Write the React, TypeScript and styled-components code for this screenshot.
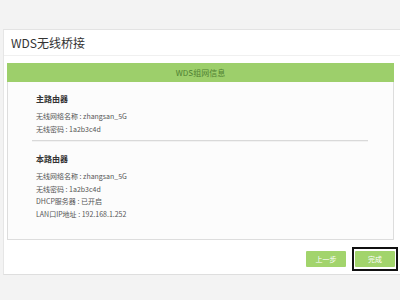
import React from "react";
import styled, { createGlobalStyle } from "styled-components";

const Global = createGlobalStyle`
  html, body {
    margin: 0;
    padding: 0;
    background: #f3f3f3;
  }
  body {
    width: 400px;
    height: 300px;
    overflow: hidden;
    font-family: "Noto Sans CJK SC", "Noto Sans", sans-serif;
  }
`;

const Page = styled.div`
  width: 400px;
  height: 300px;
  padding-top: 29px;
  padding-left: 3px;
  box-sizing: border-box;
`;

const Panel = styled.div`
  height: 246px;
  box-sizing: border-box;
  background: #ffffff;
  border-top: 1px solid #e3e3e3;
  border-left: 1px solid #e6e6e6;
  border-bottom: 1px solid #dedede;
  display: flex;
  flex-direction: column;
`;

const TitleBar = styled.div`
  height: 26px;
  box-sizing: border-box;
  padding-left: 7px;
  display: flex;
  align-items: center;
  border-bottom: 1px solid #f0f0f0;
  font-size: 12px;
  color: #333;
`;

const Section = styled.div`
  margin: 7px 6px 0 3px;
  display: flex;
  flex-direction: column;
`;

const SectionHead = styled.div`
  height: 19px;
  background: #9dcf6b;
  display: flex;
  align-items: center;
  justify-content: center;
  font-size: 8px;
  color: #4f7f31;
`;

const SectionBody = styled.div`
  height: 158px;
  box-sizing: border-box;
  border: 1px solid #dddddd;
  border-top: none;
  background: #fcfcfc;
  padding: 11px 0 0 28px;
`;

const Heading = styled.div<{ $top?: number }>`
  font-size: 8px;
  font-weight: bold;
  line-height: 12px;
  color: #333;
  margin-top: ${(p) => p.$top ?? 0}px;
  margin-bottom: 5px;
`;

const Line = styled.div<{ $lh?: number }>`
  font-size: 7px;
  line-height: ${(p) => p.$lh ?? 13}px;
  color: #555;
  white-space: nowrap;
`;

const Divider = styled.div`
  margin: 4px 0 0 -4px;
  width: 336px;
  height: 1px;
  background: #d9d9d9;
  box-shadow: 0 1px 0 #f2f2f2;
`;

const Footer = styled.div`
  flex: 1;
  display: flex;
  justify-content: flex-end;
  align-items: center;
  gap: 6px;
  padding-right: 2px;
  padding-top: 3px;
`;

const Button = styled.button`
  width: 40px;
  height: 16px;
  border: none;
  border-radius: 1px;
  background: #a2d46c;
  color: #ffffff;
  font-family: "Noto Sans CJK SC", sans-serif;
  font-size: 7px;
  padding: 0;
  display: flex;
  align-items: center;
  justify-content: center;
`;

const FocusRing = styled.div`
  border: 2px solid #111;
  padding: 2px 1px;
  display: flex;
`;

export default function App() {
  return (
    <>
      <Global />
      <Page>
        <Panel>
          <TitleBar>WDS无线桥接</TitleBar>
          <Section>
            <SectionHead>WDS组网信息</SectionHead>
            <SectionBody>
              <Heading>主路由器</Heading>
              <Line>无线网络名称 : zhangsan_5G</Line>
              <Line>无线密码 : 1a2b3c4d</Line>
              <Divider />
              <Heading $top={12}>本路由器</Heading>
              <Line $lh={12.5}>无线网络名称 : zhangsan_5G</Line>
              <Line $lh={12.5}>无线密码 : 1a2b3c4d</Line>
              <Line $lh={12.5}>DHCP服务器 : 已开启</Line>
              <Line $lh={12.5}>LAN口IP地址 :  192.168.1.252</Line>
            </SectionBody>
          </Section>
          <Footer>
            <Button>上一步</Button>
            <FocusRing>
              <Button>完成</Button>
            </FocusRing>
          </Footer>
        </Panel>
      </Page>
    </>
  );
}
